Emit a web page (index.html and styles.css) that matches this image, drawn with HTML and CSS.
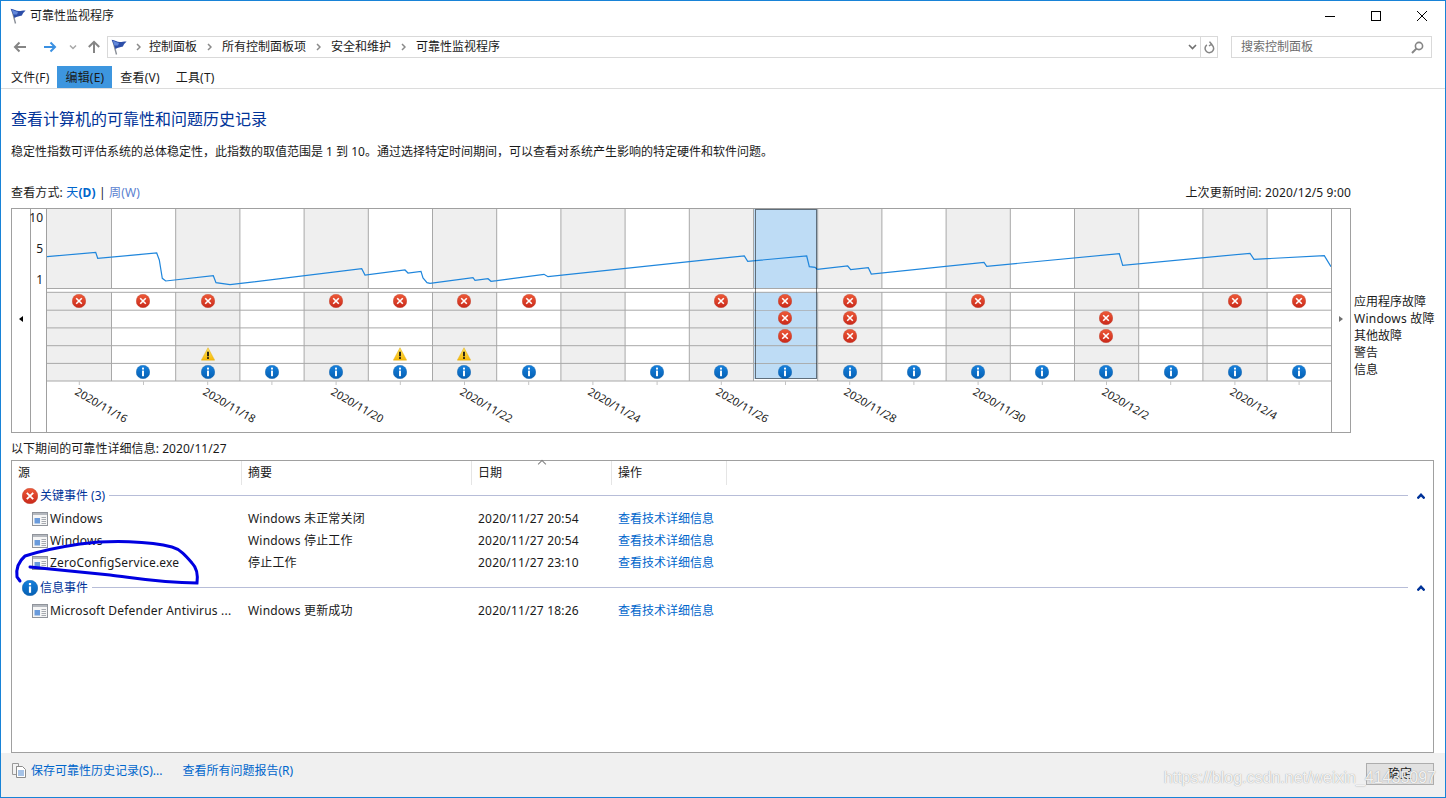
FILE: index.html
```html
<!DOCTYPE html>
<html lang="zh-CN">
<head>
  <meta charset="UTF-8" />
  <title>可靠性监视程序</title>
  <link rel="stylesheet" href="styles.css">
</head>
<body>
  <svg class="defs" width="0" height="0">
    <defs>
      <linearGradient id="redFill" x1="0" y1="0" x2="0" y2="1">
        <stop offset="0" stop-color="#ee5a38" />
        <stop offset="1" stop-color="#c9281a" />
      </linearGradient>
      <linearGradient id="blueFill" x1="0" y1="0" x2="0" y2="1">
        <stop offset="0" stop-color="#1680dc" />
        <stop offset="1" stop-color="#0560b4" />
      </linearGradient>
      <linearGradient id="yellowFill" x1="0" y1="0" x2="0" y2="1">
        <stop offset="0" stop-color="#ffe45c" />
        <stop offset="1" stop-color="#f6b90a" />
      </linearGradient>
      <symbol id="err" viewBox="0 0 16 16">
        <circle cx="8" cy="8" r="7.800" fill="url(#redFill)" stroke="#b8301c" stroke-width=".4" />
        <path d="M4.800 4.800l6.400 6.400M11.200 4.800l-6.400 6.400" stroke="#fff" stroke-width="1.800" fill="none" />
      </symbol>
      <symbol id="info" viewBox="0 0 16 16">
        <circle cx="8" cy="8" r="7.800" fill="url(#blueFill)" stroke="#05579f" stroke-width=".4" />
        <rect x="6.900" y="3" width="2.200" height="2.200" fill="#fff" />
        <rect x="6.900" y="6.400" width="2.200" height="6.400" fill="#fff" />
      </symbol>
      <symbol id="warn" viewBox="0 0 16 16">
        <path d="M8 .8L15.600 15H.4z" fill="url(#yellowFill)" stroke="#e0a800" stroke-width=".5" />
        <rect x="7" y="5.400" width="2" height="5.200" fill="#111" />
        <rect x="7" y="11.600" width="2" height="2" fill="#111" />
      </symbol>
      <symbol id="flag" viewBox="0 0 16 16">
        <path d="M2 2l3.500 13.500" stroke="#8a8f98" stroke-width="1.400" fill="none" />
        <path d="M.6 .8C4 1 6 3 9 3c2 0 4-.6 6.600-.5-1.600 1.500-3 3-3.600 5-3 .5-5 1-7.500 2.500C3.500 7 2 4 .6 .8z" fill="#2c4ea8" />
        <path d="M1.800 1.800C4 2.400 6 3.800 8 4L7 6.400 3.400 6.600z" fill="#6288da" />
      </symbol>
      <symbol id="crumb" viewBox="0 0 5 8">
        <path d="M1 1l3 3-3 3" stroke="#8a8a8a" stroke-width="1.500" fill="none" />
      </symbol>
      <symbol id="winapp" viewBox="0 0 16 14">
        <rect x=".5" y=".5" width="15" height="13" fill="#f6f6f6" stroke="#90949b" />
        <rect x="1" y="1" width="14" height="2" fill="#b4b8be" />
        <rect x="2.500" y="6" width="5.500" height="5.500" fill="#6a9bdc" />
        <path d="M9.500 5.500h4.500M9.500 7.500h4.500M9.500 9.500h4.500M9.500 11.500h4.500" stroke="#a6aab0" fill="none" />
      </symbol>
    </defs>
  </svg>

  <div class="window">
    <div class="titlebar">
      <svg class="title-flag" width="16" height="16"><use href="#flag" /></svg>
      <span class="title-text">可靠性监视程序</span>
      <div class="win-buttons">
        <div class="win-btn"><svg width="10" height="10"><path d="M0 5.500h10" stroke="#000" /></svg></div>
        <div class="win-btn"><svg width="10" height="10"><rect x=".5" y=".5" width="9" height="9" fill="none" stroke="#000" /></svg></div>
        <div class="win-btn"><svg width="10" height="10"><path d="M0 0l10 10M10 0L0 10" stroke="#000" /></svg></div>
      </div>
    </div>

    <div class="navbar">
      <svg class="nav-back" width="14" height="12" viewBox="0 0 14 12"><path d="M13 6H2M6.500 1.500L2 6l4.500 4.500" stroke="#858585" stroke-width="2" fill="none" /></svg>
      <svg class="nav-forward" width="14" height="12" viewBox="0 0 14 12"><path d="M1 6h11M7.500 1.500L12 6l-4.500 4.500" stroke="#3a90e2" stroke-width="2" fill="none" /></svg>
      <svg class="nav-recent" width="8" height="6" viewBox="0 0 8 6"><path d="M1 1.500l3 3 3-3" stroke="#a8a8a8" stroke-width="1.500" fill="none" /></svg>
      <svg class="nav-up" width="14" height="14" viewBox="0 0 14 14"><path d="M7 13V2M1.800 7L7 1.800 12.200 7" stroke="#858585" stroke-width="2" fill="none" /></svg>
      <div class="address">
        <svg class="address-flag" width="16" height="16"><use href="#flag" /></svg>
        <svg class="crumb-first" width="5" height="8"><use href="#crumb" /></svg>
        <span>控制面板</span>
        <svg class="crumb-sep" width="5" height="8"><use href="#crumb" /></svg>
        <span>所有控制面板项</span>
        <svg class="crumb-sep" width="5" height="8"><use href="#crumb" /></svg>
        <span>安全和维护</span>
        <svg class="crumb-sep" width="5" height="8"><use href="#crumb" /></svg>
        <span>可靠性监视程序</span>
        <svg class="address-drop" width="9" height="6" viewBox="0 0 9 6"><path d="M1 1l3.500 3.500L8 1" stroke="#707070" stroke-width="1.600" fill="none" /></svg>
        <div class="address-refresh">
          <svg width="11" height="13" viewBox="0 0 11 13"><path d="M6.500 3.200a4.300 4.300 0 1 1-3.600 .6M5.500 .6L7.600 3.200 5 5" stroke="#858585" stroke-width="1.500" fill="none" /></svg>
        </div>
      </div>
      <div class="search">
        <span>搜索控制面板</span>
        <svg width="13" height="13" viewBox="0 0 13 13"><circle cx="8" cy="5" r="3.600" fill="none" stroke="#858585" stroke-width="1.600" /><path d="M5.400 7.600L1 12" stroke="#858585" stroke-width="2" /></svg>
      </div>
    </div>

    <div class="menubar">
      <div class="menu-item">文件(F)</div>
      <div class="menu-item active">编辑(E)</div>
      <div class="menu-item">查看(V)</div>
      <div class="menu-item">工具(T)</div>
    </div>

    <div class="content">
      <h1>查看计算机的可靠性和问题历史记录</h1>
      <p class="desc">稳定性指数可评估系统的总体稳定性，此指数的取值范围是 1 到 10。通过选择特定时间期间，可以查看对系统产生影响的特定硬件和软件问题。</p>

      <div class="view-row">
        <div class="view-mode">查看方式: <a class="link">天<b>(D)</b></a> | <a class="link visited">周(W)</a></div>
        <div class="updated">上次更新时间: 2020/12/5 9:00</div>
      </div>

      <div class="chart-row">
        <div class="chart">
          <div class="chart-nav"><span class="arrow-left"></span></div>
          <div class="axis">
            <span>10</span>
            <span>5</span>
            <span>1</span>
          </div>
          <svg class="plot" width="1284" height="224" viewBox="47 209 1284 224">
            <g class="shade">
              <rect x="47" y="209" width="64.500" height="172" />
              <rect x="175.700" y="209" width="64.200" height="172" />
              <rect x="304.100" y="209" width="64.200" height="172" />
              <rect x="432.500" y="209" width="64.200" height="172" />
              <rect x="560.900" y="209" width="64.200" height="172" />
              <rect x="689.300" y="209" width="64.200" height="172" />
              <rect x="817.700" y="209" width="64.200" height="172" />
              <rect x="946.100" y="209" width="64.200" height="172" />
              <rect x="1074.500" y="209" width="64.200" height="172" />
              <rect x="1202.900" y="209" width="64.200" height="172" />
            </g>
            <rect class="selected" x="754" y="209" width="64" height="170" />
            <path class="grid" d="M111.500 209V381M175.700 209V381M239.900 209V381M304.100 209V381M368.300 209V381M432.500 209V381M496.700 209V381M560.900 209V381M625.100 209V381M689.300 209V381M753.500 209V381M817.700 209V381M881.900 209V381M946.100 209V381M1010.300 209V381M1074.500 209V381M1138.700 209V381M1202.900 209V381M1267.100 209V381" />
            <rect class="gap" x="47" y="289" width="1284" height="3" />
            <path class="grid" d="M47 288.500H1331M47 292.300H1331M47 310.200H1331M47 327.900H1331M47 345.700H1331M47 363.400H1331M47 381H1331" />
            <rect class="selected" x="755" y="293" width="62" height="17" />
            <rect class="selected" x="755" y="311" width="62" height="16" />
            <rect class="selected" x="755" y="329" width="62" height="16" />
            <rect class="selected" x="755" y="347" width="62" height="16" />
            <rect class="selected" x="755" y="364" width="62" height="15" />
            <path class="ticks" d="M79.300 381v4M143.500 381v4M207.700 381v4M271.900 381v4M336.100 381v4M400.300 381v4M464.500 381v4M528.700 381v4M592.900 381v4M657.100 381v4M721.300 381v4M785.500 381v4M849.700 381v4M913.900 381v4M978.100 381v4M1042.300 381v4M1106.500 381v4M1170.700 381v4M1234.900 381v4M1299.100 381v4" />
            <polyline class="trend" points="47,256.700 95.700,252.300 97.700,258.300 156.700,253 159.300,260 162.300,278.300 165.700,281 213.300,275.700 216,282.700 230,284.700 361.700,268.700 365,275 405,270 408,273 421,271.300 423,278 427,282.700 430,283.300 473,277.700 475,280.300 488,278.700 491,281.300 497,280.700 544,274.300 548,276.700 720,258.300 744.300,256 747.700,261.300 806.700,256 809.300,266.700 815,267.300 817.300,269.300 847.700,266 850.700,269.700 868.300,267.700 871.300,274 984,262.300 986.700,266.300 1119.300,253.700 1122.700,265.300 1250,253.300 1254,259.300 1324.300,255.700 1331,266.700" />
            <rect class="focus" x="755.500" y="209.500" width="61" height="169" />

            <use href="#err" x="72" y="294" width="14" height="14" />
            <use href="#err" x="136" y="294" width="14" height="14" />
            <use href="#err" x="201" y="294" width="14" height="14" />
            <use href="#err" x="329" y="294" width="14" height="14" />
            <use href="#err" x="393" y="294" width="14" height="14" />
            <use href="#err" x="457" y="294" width="14" height="14" />
            <use href="#err" x="522" y="294" width="14" height="14" />
            <use href="#err" x="714" y="294" width="14" height="14" />
            <use href="#err" x="778" y="294" width="14" height="14" />
            <use href="#err" x="843" y="294" width="14" height="14" />
            <use href="#err" x="971" y="294" width="14" height="14" />
            <use href="#err" x="1228" y="294" width="14" height="14" />
            <use href="#err" x="1292" y="294" width="14" height="14" />

            <use href="#err" x="778" y="311" width="14" height="14" />
            <use href="#err" x="843" y="311" width="14" height="14" />
            <use href="#err" x="1099" y="311" width="14" height="14" />

            <use href="#err" x="778" y="329" width="14" height="14" />
            <use href="#err" x="843" y="329" width="14" height="14" />
            <use href="#err" x="1099" y="329" width="14" height="14" />

            <use href="#warn" x="201" y="347" width="14" height="14" />
            <use href="#warn" x="393" y="347" width="14" height="14" />
            <use href="#warn" x="457" y="347" width="14" height="14" />

            <use href="#info" x="136" y="365" width="14" height="14" />
            <use href="#info" x="201" y="365" width="14" height="14" />
            <use href="#info" x="265" y="365" width="14" height="14" />
            <use href="#info" x="329" y="365" width="14" height="14" />
            <use href="#info" x="393" y="365" width="14" height="14" />
            <use href="#info" x="457" y="365" width="14" height="14" />
            <use href="#info" x="522" y="365" width="14" height="14" />
            <use href="#info" x="650" y="365" width="14" height="14" />
            <use href="#info" x="714" y="365" width="14" height="14" />
            <use href="#info" x="778" y="365" width="14" height="14" />
            <use href="#info" x="843" y="365" width="14" height="14" />
            <use href="#info" x="907" y="365" width="14" height="14" />
            <use href="#info" x="971" y="365" width="14" height="14" />
            <use href="#info" x="1035" y="365" width="14" height="14" />
            <use href="#info" x="1099" y="365" width="14" height="14" />
            <use href="#info" x="1164" y="365" width="14" height="14" />
            <use href="#info" x="1228" y="365" width="14" height="14" />
            <use href="#info" x="1292" y="365" width="14" height="14" />

            <g class="dates">
              <text x="74" y="394" transform="rotate(30 74 394)">2020/11/16</text>
              <text x="202" y="394" transform="rotate(30 202 394)">2020/11/18</text>
              <text x="330" y="394" transform="rotate(30 330 394)">2020/11/20</text>
              <text x="459" y="394" transform="rotate(30 459 394)">2020/11/22</text>
              <text x="587" y="394" transform="rotate(30 587 394)">2020/11/24</text>
              <text x="715" y="394" transform="rotate(30 715 394)">2020/11/26</text>
              <text x="843" y="394" transform="rotate(30 843 394)">2020/11/28</text>
              <text x="972" y="394" transform="rotate(30 972 394)">2020/11/30</text>
              <text x="1101" y="394" transform="rotate(30 1101 394)">2020/12/2</text>
              <text x="1229" y="394" transform="rotate(30 1229 394)">2020/12/4</text>
            </g>
          </svg>
          <div class="chart-nav right"><span class="arrow-right"></span></div>
        </div>
        <div class="legend">
          <div>应用程序故障</div>
          <div class="legend-latin">Windows 故障</div>
          <div>其他故障</div>
          <div>警告</div>
          <div>信息</div>
        </div>
      </div>

      <div class="detail-label">以下期间的可靠性详细信息: 2020/11/27</div>

      <div class="events">
        <div class="events-head">
          <div class="head-cell">源</div>
          <div class="head-cell">摘要</div>
          <div class="head-cell sorted">日期</div>
          <div class="head-cell">操作</div>
        </div>

        <div class="group">
          <svg width="16" height="16"><use href="#err" /></svg>
          <span>关键事件 (3)</span>
          <i class="group-line"></i>
          <svg class="group-toggle" width="8" height="6" viewBox="0 0 8 6"><path d="M.4 5.500L4 1.800l3.600 3.700" stroke="#003399" stroke-width="2.400" fill="none" /></svg>
        </div>
        <div class="event">
          <div class="source"><svg width="16" height="14"><use href="#winapp" /></svg>Windows</div>
          <div>Windows 未正常关闭</div>
          <div>2020/11/27 20:54</div>
          <a class="link">查看技术详细信息</a>
        </div>
        <div class="event">
          <div class="source"><svg width="16" height="14"><use href="#winapp" /></svg>Windows</div>
          <div>Windows 停止工作</div>
          <div>2020/11/27 20:54</div>
          <a class="link">查看技术详细信息</a>
        </div>
        <div class="event">
          <div class="source"><svg width="16" height="14"><use href="#winapp" /></svg>ZeroConfigService.exe</div>
          <div>停止工作</div>
          <div>2020/11/27 23:10</div>
          <a class="link">查看技术详细信息</a>
        </div>

        <div class="group second">
          <svg width="16" height="16"><use href="#info" /></svg>
          <span>信息事件</span>
          <i class="group-line"></i>
          <svg class="group-toggle" width="8" height="6" viewBox="0 0 8 6"><path d="M.4 5.500L4 1.800l3.600 3.700" stroke="#003399" stroke-width="2.400" fill="none" /></svg>
        </div>
        <div class="event">
          <div class="source"><svg width="16" height="14"><use href="#winapp" /></svg>Microsoft Defender Antivirus ...</div>
          <div>Windows 更新成功</div>
          <div>2020/11/27 18:26</div>
          <a class="link">查看技术详细信息</a>
        </div>
      </div>
    </div>

    <div class="footer">
      <svg width="14" height="15" viewBox="0 0 14 15">
        <path d="M.5 .5h6v3h-2v8h-4z" fill="#f2f2f2" stroke="#9a9a9a" />
        <path d="M4.500 3.500h6l3 3v8h-9z" fill="#fff" stroke="#8c8c8c" />
        <path d="M6 8h6M6 10h6M6 12h6" stroke="#4f87cf" />
      </svg>
      <a class="link save">保存可靠性历史记录(S)...</a>
      <a class="link">查看所有问题报告(R)</a>
      <button class="ok">确定</button>
    </div>
  </div>

  <svg class="ink" width="1446" height="798" viewBox="0 0 1446 798">
    <path d="M30 567C60 570 80 572 110 575C135 578 160 583 197 583C198 575 197 568 192 563C186 556 180 549 172 547C150 541 110 540 80 544C60 547 40 551 25 556C18 562 16 570 17 577L20 581" />
  </svg>
  <div class="watermark">https://blog.csdn.net/weixin_41435097</div>
</body>
</html>
```

FILE: styles.css
```css
* {
  box-sizing: border-box;
}

html, body {
  margin: 0;
  height: 100%;
  overflow: hidden;
}

body {
  font-family: "Noto Sans", "Noto Sans CJK SC", sans-serif;
  font-size: 12px;
  line-height: 16px;
  color: #1a1a1a;
  background: white;
}

svg {
  display: block;
  flex: none;
}

.defs {
  position: absolute;
}

.window {
  width: 1446px;
  height: 798px;
  border: 1px solid #1883d7;
  display: flex;
  flex-direction: column;
}

/* title bar */
.titlebar {
  height: 30px;
  display: flex;
  align-items: center;
  padding-left: 9px;
}

.title-flag {
  margin-top: -1px;
}

.title-text {
  margin-left: 4px;
}

.win-buttons {
  margin-left: auto;
  display: flex;
}

.win-btn {
  width: 46px;
  height: 30px;
  display: flex;
  align-items: center;
  justify-content: center;
}

/* back / forward + address */
.navbar {
  margin-top: 5px;
  height: 22px;
  display: flex;
  align-items: center;
  padding-left: 12px;
}

.nav-back { margin-right: 16px; }
.nav-forward { margin-right: 12px; }
.nav-recent { margin-right: 10px; }
.nav-up { margin-right: 6px; }

.address {
  width: 1111px;
  height: 22px;
  border: 1px solid #d9d9d9;
  display: flex;
  align-items: center;
  padding-left: 3px;
  white-space: nowrap;
}

.crumb-first {
  margin: 0 8px 0 9px;
}

.crumb-sep {
  margin: 0 10px;
}

.address-drop {
  margin-left: auto;
  margin-right: 3px;
}

.address-refresh {
  width: 17px;
  height: 100%;
  border-left: 1px solid #d9d9d9;
  display: flex;
  align-items: center;
  justify-content: center;
}

.search {
  margin-left: 13px;
  width: 201px;
  height: 22px;
  border: 1px solid #d9d9d9;
  color: #6d6d6d;
  display: flex;
  align-items: center;
  justify-content: space-between;
  padding: 0 7px 0 9px;
}

/* menu */
.menubar {
  margin-top: 8px;
  height: 23px;
  border-bottom: 1px solid #dcdcdc;
  display: flex;
  padding-left: 2px;
}

.menu-item {
  padding: 0 8px;
  line-height: 23px;
  height: 22px;
  letter-spacing: .2px;
}

.menu-item.active {
  background: #3d96df;
}

/* main area */
.content {
  flex: 1;
  display: flex;
  flex-direction: column;
  padding: 0 11px 0 10px;
  min-height: 0;
}

h1 {
  margin: 19px 0 0;
  font-size: 16px;
  line-height: 22px;
  font-weight: normal;
  color: #003399;
}

.desc {
  margin: 14px 0 0;
}

.view-row {
  margin-top: 25px;
  width: 1340px;
  display: flex;
  justify-content: space-between;
}

.view-mode {
  letter-spacing: .15px;
}

.updated {
  letter-spacing: .15px;
}

.link {
  color: #0066cc;
}

.link.visited {
  color: #5a7fd0;
}

.link b {
  font-weight: bold;
}

/* reliability chart */
.chart-row {
  margin-top: 7px;
  display: flex;
}

.chart {
  width: 1340px;
  height: 225px;
  border: 1px solid #a0a0a0;
  display: flex;
}

.chart-nav {
  width: 19px;
  display: flex;
  align-items: center;
  justify-content: center;
  padding-bottom: 3px;
  border-right: 1px solid #a0a0a0;
}

.chart-nav.right {
  flex: 1;
  border-right: none;
  border-left: 1px solid #a0a0a0;
}

.arrow-left {
  border: 3.500px solid transparent;
  border-left-width: 0;
  border-right: 4px solid #000;
}

.arrow-right {
  border: 3.500px solid transparent;
  border-right-width: 0;
  border-left: 4px solid #707070;
}

.axis {
  width: 16px;
  border-right: 1px solid #a0a0a0;
  display: flex;
  flex-direction: column;
  align-items: flex-end;
  gap: 15px;
  padding: 1px 3px 0 0;
}

.plot text {
  font-size: 11px;
  fill: #1a1a1a;
}

.shade rect {
  fill: #efefef;
}

.selected {
  fill: #bedcf5;
}

.gap {
  fill: #fff;
}

.grid {
  fill: none;
  stroke: #a8a8a8;
  stroke-width: 1;
}

.ticks {
  stroke: #c4c4c4;
  fill: none;
}

.trend {
  fill: none;
  stroke: #1f86dc;
  stroke-width: 1.200;
}

.focus {
  fill: none;
  stroke: #000;
  stroke-width: 1;
  stroke-dasharray: 1 1;
}

.legend {
  margin-left: 3px;
  padding-top: 85px;
  line-height: 17px;
  white-space: nowrap;
}

.legend-latin {
  letter-spacing: .25px;
}

.detail-label {
  margin-top: 8px;
  letter-spacing: .06px;
}

/* events list */
.events {
  margin-top: 3px;
  flex: 1;
  border: 1px solid #a0a0a0;
}

.events-head {
  height: 24px;
  margin-bottom: -1px;
  display: grid;
  grid-template-columns: 230px 230px 140px 115px;
}

.head-cell {
  padding: 4px 0 0 6px;
  line-height: 16px;
  border-right: 1px solid #e5e5e5;
  position: relative;
}

.head-cell.sorted::after {
  content: "";
  position: absolute;
  left: 67px;
  top: 0;
  width: 5px;
  height: 5px;
  border-left: 1px solid #808080;
  border-top: 1px solid #808080;
  transform: rotate(45deg);
}

.group {
  height: 24px;
  display: flex;
  align-items: center;
  padding-left: 10px;
  color: #003399;
}

.group.second {
  margin-top: 2px;
}

.group span {
  margin-left: 2px;
}

.group-line {
  flex: 1;
  height: 1px;
  margin: 0 0 2px 4px;
  background: #b7bdd8;
}

.group-toggle {
  margin: 0 8px 0 9px;
}

.event {
  height: 22px;
  display: grid;
  grid-template-columns: 230px 230px 140px 115px;
  align-items: center;
  white-space: nowrap;
}

.event > * {
  padding-left: 6px;
}

.event > div {
  letter-spacing: .2px;
}

.event .source {
  padding-left: 20px;
  display: flex;
  align-items: center;
  gap: 2px;
}

/* bottom bar */
.footer {
  height: 44px;
  background: #f0f0f0;
  display: flex;
  align-items: flex-start;
  padding: 10px 11px 0;
}

.footer .save {
  margin: 0 20px 0 5px;
}

.ok {
  margin-left: auto;
  width: 68px;
  height: 22px;
  padding: 0;
  background: #e1e1e1;
  border: 1px solid #adadad;
  font: inherit;
  color: #1a1a1a;
}

/* pen mark and site stamp lying over the shot */
.ink {
  position: absolute;
  left: 0;
  top: 0;
  pointer-events: none;
}

.ink path {
  fill: none;
  stroke: #0000e0;
  stroke-width: 3;
  stroke-linecap: round;
}

.watermark {
  position: absolute;
  right: 10px;
  top: 768px;
  font-family: "Liberation Sans", sans-serif;
  font-size: 16px;
  line-height: 20px;
  color: rgba(255, 255, 255, 0.9);
  text-shadow: 0 0 1px rgba(110, 110, 110, 0.8);
}
```
